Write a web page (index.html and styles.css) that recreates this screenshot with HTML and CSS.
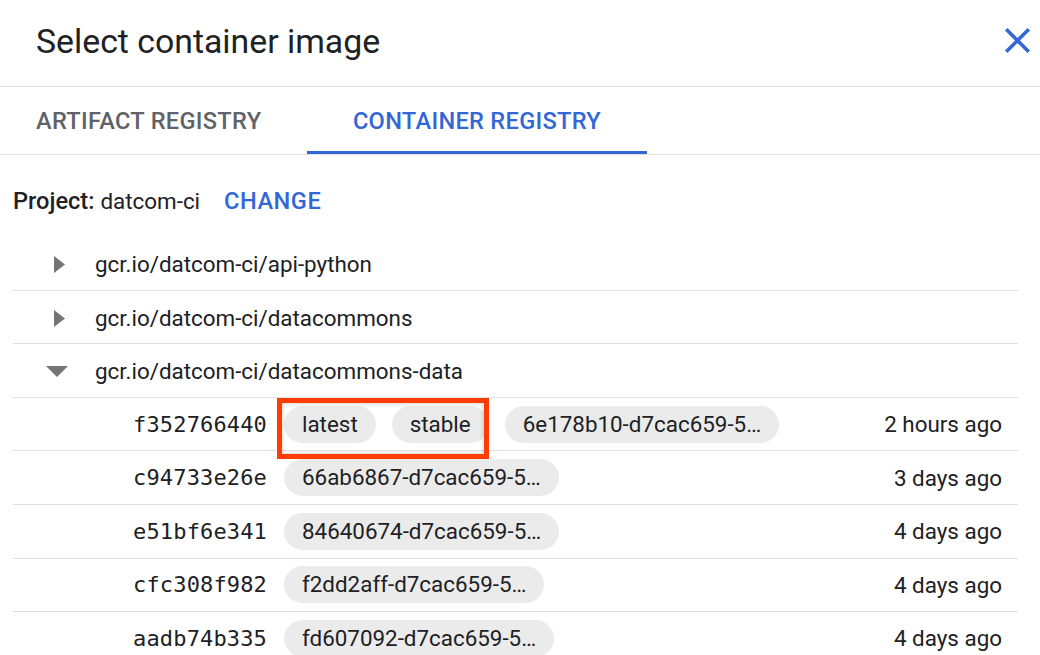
FILE: index.html
```html
<!DOCTYPE html>
<html>
<head>
<meta charset="utf-8">
<link rel="stylesheet" href="styles.css">
</head>
<body>
<div class="dialog">
  <div class="header">
    <h1 class="title">Select container image</h1>
    <button class="close" aria-label="Close">
      <svg viewBox="0 0 24 24" width="43" height="43"><path fill="#3367d6" d="M19 6.41L17.59 5 12 10.59 6.41 5 5 6.41 10.59 12 5 17.59 6.41 19 12 13.41 17.59 19 19 17.59 13.41 12z"/></svg>
    </button>
  </div>
  <div class="tabs">
    <div class="tab tab-first">ARTIFACT REGISTRY</div>
    <div class="tab tab-active">CONTAINER REGISTRY</div>
  </div>
  <div class="project">
    <span class="project-label">Project:</span>
    <span class="project-name">datcom-ci</span>
    <span class="change">CHANGE</span>
  </div>
  <div class="tree">
    <div class="repo-row">
      <svg class="tri-right" width="11" height="17" viewBox="0 0 11 17"><polygon points="0,0 11,8.5 0,17" fill="#757575"/></svg>
      <span class="repo">gcr.io/datcom-ci/api-python</span>
    </div>
    <div class="repo-row">
      <svg class="tri-right" width="11" height="17" viewBox="0 0 11 17"><polygon points="0,0 11,8.5 0,17" fill="#757575"/></svg>
      <span class="repo">gcr.io/datcom-ci/datacommons</span>
    </div>
    <div class="repo-row">
      <svg class="tri-down" width="22" height="11" viewBox="0 0 22 11"><polygon points="0,0 22,0 11,11" fill="#757575"/></svg>
      <span class="repo">gcr.io/datcom-ci/datacommons-data</span>
    </div>
    <div class="digest-row">
      <span class="digest">f352766440</span>
      <div class="chips">
        <span class="chip">latest</span>
        <span class="chip">stable</span>
        <span class="chip">6e178b10-d7cac659-5…</span>
      </div>
      <span class="time">2 hours ago</span>
      <div class="highlight"></div>
    </div>
    <div class="digest-row">
      <span class="digest">c94733e26e</span>
      <div class="chips"><span class="chip">66ab6867-d7cac659-5…</span></div>
      <span class="time">3 days ago</span>
    </div>
    <div class="digest-row">
      <span class="digest">e51bf6e341</span>
      <div class="chips"><span class="chip">84640674-d7cac659-5…</span></div>
      <span class="time">4 days ago</span>
    </div>
    <div class="digest-row">
      <span class="digest">cfc308f982</span>
      <div class="chips"><span class="chip">f2dd2aff-d7cac659-5…</span></div>
      <span class="time">4 days ago</span>
    </div>
    <div class="digest-row">
      <span class="digest">aadb74b335</span>
      <div class="chips"><span class="chip">fd607092-d7cac659-5…</span></div>
      <span class="time">4 days ago</span>
    </div>
  </div>
</div>
</body>
</html>
```
FILE: styles.css
```css
html, body {
  margin: 0;
  padding: 0;
  background: #fff;
}
body {
  font-family: Roboto, "Noto Sans", "Liberation Sans", sans-serif;
  color: #202124;
  overflow: hidden;
}
.dialog {
  width: 1040px;
}
.header {
  height: 86px;
  display: flex;
  align-items: center;
  padding-left: 36px;
  border-bottom: 1px solid #e0e0e0;
}
.title {
  margin: 0 0 4px 0;
  font-size: 33.8px;
  font-weight: 400;
  color: #202124;
  flex: 1;
}
.close {
  width: 43px;
  height: 43px;
  padding: 0;
  border: 0;
  background: none;
  margin: 0 1px 5px 0;
  display: flex;
}
.tabs {
  display: flex;
  border-bottom: 1px solid #e0e0e0;
  box-sizing: border-box;
  height: 68px;
}
.tab {
  display: flex;
  align-items: center;
  justify-content: center;
  font-size: 23.6px;
  font-weight: 500;
  letter-spacing: 0.3px;
  color: #5f6368;
  box-sizing: border-box;
  border-bottom: 3px solid transparent;
  padding-top: 3px;
}
.tab-first {
  width: 307px;
  justify-content: flex-start;
  padding-left: 36px;
}
.tab-active {
  width: 340px;
  color: #3367d6;
  border-bottom-color: #3367d6;
}
.project {
  padding: 32px 0 0 13px;
  box-sizing: border-box;
  height: 82px;
  font-size: 22.4px;
  line-height: 28px;
  display: flex;
  align-items: flex-start;
}
.project-label {
  font-weight: 500;
  font-size: 23.6px;
  margin-right: 6px;
}
.change {
  margin-left: 24px;
  color: #3367d6;
  font-weight: 500;
  font-size: 23.6px;
  letter-spacing: 0.5px;
}
.tree {
  margin-left: 13px;
  width: 1005px;
}
.repo-row, .digest-row {
  height: 53.6px;
  box-sizing: border-box;
  border-bottom: 1px solid #e0e0e0;
  display: flex;
  align-items: center;
  font-size: 22.4px;
  position: relative;
}
.tri-right {
  margin-left: 41px;
  margin-right: 30px;
  margin-top: 3px;
}
.tri-down {
  margin-left: 33px;
  margin-right: 27px;
  margin-top: 2px;
}
.repo {
  color: #202124;
  padding-top: 2px;
}
.digest {
  width: 254px;
  text-align: right;
  font-family: "DejaVu Sans Mono", "Liberation Mono", monospace;
  font-size: 22px;
  letter-spacing: 0.15px;
  color: #202124;
}
.chips {
  display: flex;
  gap: 16px;
  margin-left: 17px;
}
.chip {
  height: 37px;
  line-height: 37px;
  border-radius: 18.5px;
  background: #ebebeb;
  padding: 0 18px;
  font-size: 22.4px;
  color: #202124;
  white-space: nowrap;
}
.time {
  margin-left: auto;
  padding-right: 16px;
  color: #202124;
}
.highlight {
  position: absolute;
  left: 264px;
  top: 0;
  width: 212px;
  height: 61px;
  box-sizing: border-box;
  border: 5px solid #ff3d00;
  box-shadow: inset 0 0 4px rgba(0,0,0,0.25);
}
```
